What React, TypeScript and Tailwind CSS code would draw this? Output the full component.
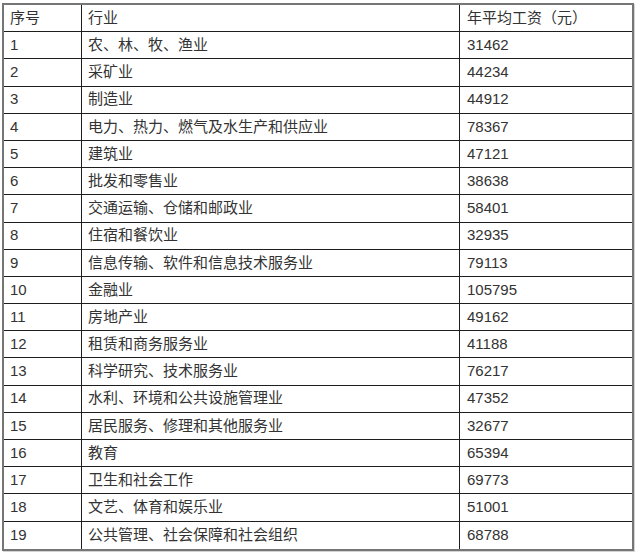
import React from 'react'

const rows: [string, string, string][] = [
    ['1', '农、林、牧、渔业', '31462'],
    ['2', '采矿业', '44234'],
    ['3', '制造业', '44912'],
    ['4', '电力、热力、燃气及水生产和供应业', '78367'],
    ['5', '建筑业', '47121'],
    ['6', '批发和零售业', '38638'],
    ['7', '交通运输、仓储和邮政业', '58401'],
    ['8', '住宿和餐饮业', '32935'],
    ['9', '信息传输、软件和信息技术服务业', '79113'],
    ['10', '金融业', '105795'],
    ['11', '房地产业', '49162'],
    ['12', '租赁和商务服务业', '41188'],
    ['13', '科学研究、技术服务业', '76217'],
    ['14', '水利、环境和公共设施管理业', '47352'],
    ['15', '居民服务、修理和其他服务业', '32677'],
    ['16', '教育', '65394'],
    ['17', '卫生和社会工作', '69773'],
    ['18', '文艺、体育和娱乐业', '51001'],
    ['19', '公共管理、社会保障和社会组织', '68788'],
]

export default function App() {
    const all: [string, string, string][] = [['序号', '行业', '年平均工资（元）'], ...rows]

    return (
        <div className="w-[640px] h-[556px] bg-white pl-[2px] pt-[3px]">
            <div
                className="w-[632px] border-2 border-[#767676] shadow-[1px_1px_0_#d4d4d4] grid grid-cols-[78px_378px_1fr] text-[15px] text-[#333]"
                style={{ fontFamily: '"Liberation Sans", Arial, "Noto Sans CJK SC", sans-serif' }}
            >
                {all.map((r, i) => {
                    const last = i === all.length - 1
                    const b = last ? '' : 'border-b border-b-[#1e1e1e]'
                    return (
                        <React.Fragment key={i}>
                            <div className={`h-[27.2px] flex items-center pl-[6px] border-r border-r-[#1e1e1e] ${b}`}>{r[0]}</div>
                            <div className={`h-[27.2px] flex items-center pl-[6px] border-r border-r-[#1e1e1e] ${b}`}>{r[1]}</div>
                            <div className={`h-[27.2px] flex items-center pl-[7px] ${b}`}>{r[2]}</div>
                        </React.Fragment>
                    )
                })}
            </div>
        </div>
    )
}
